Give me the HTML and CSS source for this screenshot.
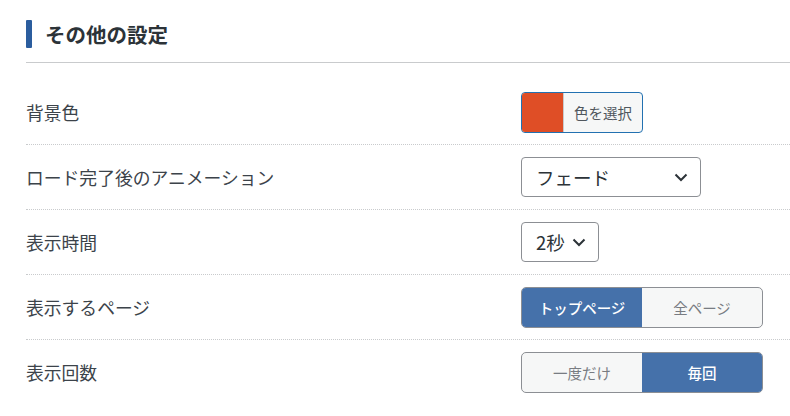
FILE: index.html
```html
<!DOCTYPE html>
<html lang="ja">
<head>
  <meta charset="UTF-8">
  <meta name="viewport" content="width=device-width, initial-scale=1.0">
  <title>その他の設定</title>
  <link rel="stylesheet" href="styles.css">
</head>
<body>
  <div class="settings">
    <h2 class="section-title"><span class="title-bar"></span>その他の設定</h2>

    <div class="rows">
      <div class="row">
        <div class="label">背景色</div>
        <div class="control">
          <button type="button" class="color-picker">
            <span class="swatch"></span>
            <span class="color-text">色を選択</span>
          </button>
        </div>
      </div>

      <div class="row">
        <div class="label">ロード完了後のアニメーション</div>
        <div class="control">
          <div class="select select-wide">
            <span>フェード</span>
            <svg class="chevron" width="14" height="9" viewBox="0 0 14 9"><path d="M1.5 1.5l5.5 5.5 5.5-5.5" fill="none" stroke="#2c3338" stroke-width="2"/></svg>
          </div>
        </div>
      </div>

      <div class="row">
        <div class="label">表示時間</div>
        <div class="control">
          <div class="select select-small">
            <span>2秒</span>
            <svg class="chevron" width="14" height="9" viewBox="0 0 14 9"><path d="M1.5 1.5l5.5 5.5 5.5-5.5" fill="none" stroke="#2c3338" stroke-width="2"/></svg>
          </div>
        </div>
      </div>

      <div class="row">
        <div class="label">表示するページ</div>
        <div class="control">
          <div class="segmented">
            <button type="button" class="segment active">トップページ</button>
            <button type="button" class="segment">全ページ</button>
          </div>
        </div>
      </div>

      <div class="row">
        <div class="label">表示回数</div>
        <div class="control">
          <div class="segmented">
            <button type="button" class="segment">一度だけ</button>
            <button type="button" class="segment active">毎回</button>
          </div>
        </div>
      </div>
    </div>
  </div>
</body>
</html>
```

FILE: styles.css
```css
/* General Styles */
body {
  margin: 0;
  padding: 0;
  background-color: #fff;
  font-family: "Noto Sans CJK JP", "Noto Sans", sans-serif;
  color: #3c434a;
}

.settings {
  padding: 20px 0 0 26px;
}

/* Section title */
.section-title {
  display: flex;
  align-items: center;
  margin: 0;
  padding-bottom: 14px;
  border-bottom: 1px solid #c9cbcd;
  font-size: 20.5px;
  font-weight: bold;
  line-height: 28px;
  color: #2c3338;
}

.title-bar {
  width: 6px;
  height: 28px;
  margin-right: 13px;
  background-color: #2b5d9e;
  border-radius: 1px;
}

/* Rows */
.rows {
  margin-top: 17px;
}

.row {
  display: grid;
  grid-template-columns: 495px 1fr;
  align-items: center;
  height: 64px;
  border-bottom: 1px dotted #c9cbcd;
}

.row:last-child {
  border-bottom: none;
}

.label {
  font-size: 17.8px;
}

.control {
  display: flex;
  align-items: center;
}

/* Color picker */
.color-picker {
  display: flex;
  width: 122px;
  height: 41px;
  padding: 0;
  border: 1px solid #2271b1;
  border-radius: 4px;
  background-color: #f6f7f7;
  overflow: hidden;
  font-family: inherit;
  cursor: pointer;
}

.swatch {
  width: 41px;
  height: 100%;
  background-color: #df4e26;
  border-right: 1px solid #c9cbcd;
}

.color-text {
  flex: 1;
  align-self: center;
  font-size: 14.5px;
  color: #50575e;
  text-align: center;
}

/* Select */
.select {
  display: flex;
  align-items: center;
  justify-content: space-between;
  box-sizing: border-box;
  height: 40px;
  padding: 0 12px 0 14px;
  border: 1px solid #8c8f94;
  border-radius: 4px;
  background-color: #fff;
  font-size: 18.5px;
  color: #2c3338;
}

.select-wide {
  width: 180px;
}

.select-small {
  width: 78px;
}

.chevron {
  display: block;
}

/* Segmented buttons */
.segmented {
  display: flex;
  box-sizing: border-box;
  width: 242px;
  height: 41px;
  border: 1px solid #8c8f94;
  border-radius: 5px;
  overflow: hidden;
  background-color: #f6f7f7;
}

.segment {
  flex: 1;
  padding: 0;
  border: none;
  background-color: transparent;
  font-family: inherit;
  font-size: 14.5px;
  color: #787c82;
  cursor: pointer;
}

.segment.active {
  background-color: #4571aa;
  color: #fff;
  font-weight: 500;
}
```
